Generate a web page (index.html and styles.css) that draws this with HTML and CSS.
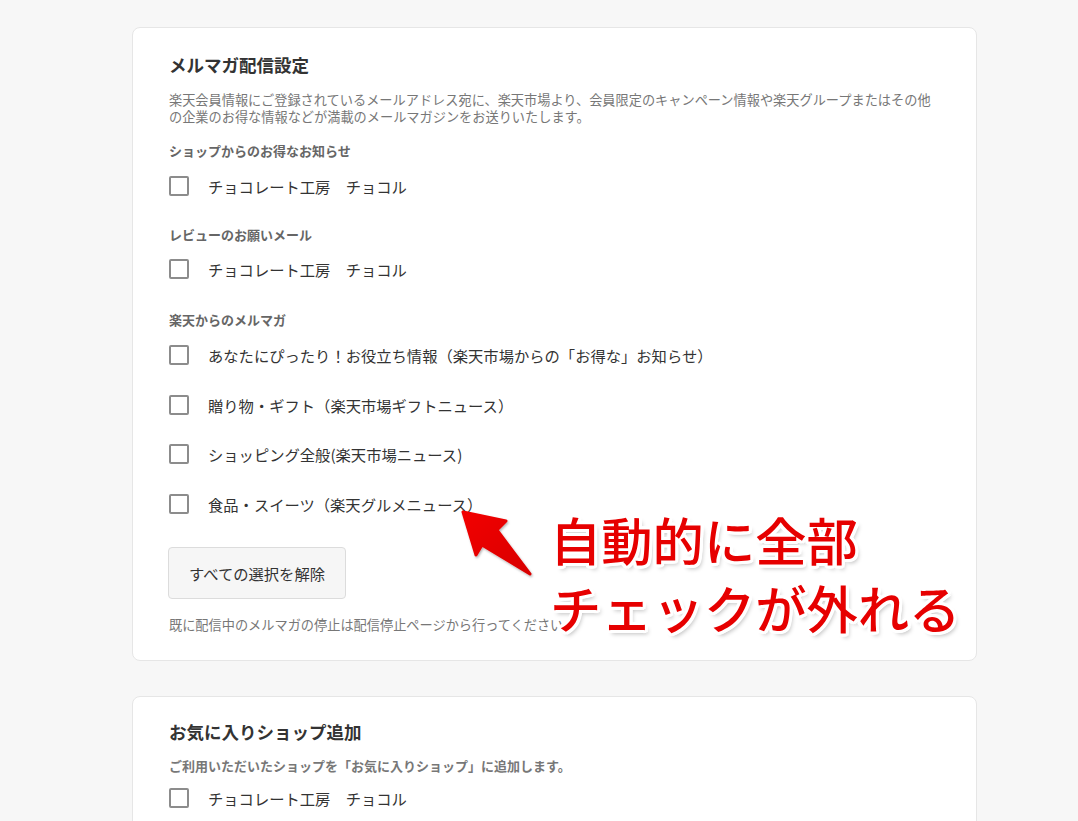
FILE: index.html
```html
<!DOCTYPE html>
<html lang="ja">
<head>
<meta charset="utf-8">
<title>メルマガ配信設定</title>
<link rel="stylesheet" href="styles.css">
</head>
<body>
<div class="page">
  <section class="card card-first">
    <h2 class="title">メルマガ配信設定</h2>
    <p class="desc">楽天会員情報にご登録されているメールアドレス宛に、楽天市場より、会員限定のキャンペーン情報や楽天グループまたはその他の企業のお得な情報などが満載のメールマガジンをお送りいたします。</p>

    <h3 class="group">ショップからのお得なお知らせ</h3>
    <label class="check"><span class="box"></span><span class="text">チョコレート工房　チョコル</span></label>

    <h3 class="group">レビューのお願いメール</h3>
    <label class="check check-tight"><span class="box"></span><span class="text">チョコレート工房　チョコル</span></label>

    <h3 class="group group-wide">楽天からのメルマガ</h3>
    <div class="list">
      <label class="check"><span class="box"></span><span class="text">あなたにぴったり！お役立ち情報（楽天市場からの「お得な」お知らせ）</span></label>
      <label class="check"><span class="box"></span><span class="text">贈り物・ギフト（楽天市場ギフトニュース）</span></label>
      <label class="check"><span class="box"></span><span class="text">ショッピング全般(楽天市場ニュース)</span></label>
      <label class="check"><span class="box"></span><span class="text">食品・スイーツ（楽天グルメニュース）</span></label>
    </div>

    <button class="btn" type="button">すべての選択を解除</button>
    <p class="note">既に配信中のメルマガの停止は配信停止ページから行ってください。</p>
  </section>

  <section class="card card-second">
    <h2 class="title">お気に入りショップ追加</h2>
    <p class="desc2">ご利用いただいたショップを「お気に入りショップ」に追加します。</p>
    <label class="check"><span class="box"></span><span class="text">チョコレート工房　チョコル</span></label>
  </section>
</div>

<svg class="arrow" width="90" height="85" viewBox="450 500 90 85" aria-hidden="true">
  <defs>
    <linearGradient id="ag" x1="0" y1="0" x2="1" y2="1">
      <stop offset="0" stop-color="#f20000"/>
      <stop offset="1" stop-color="#d80000"/>
    </linearGradient>
    <filter id="sh" x="-20%" y="-20%" width="150%" height="150%">
      <feDropShadow dx="1" dy="1.5" stdDeviation="1.2" flood-color="#000" flood-opacity="0.3"/>
    </filter>
  </defs>
  <polygon points="463,512 506,521 497,530 530,574 482,545 476,555" fill="url(#ag)" stroke="url(#ag)" stroke-width="3" stroke-linejoin="round" filter="url(#sh)"/>
</svg>

<div class="annot">自動的に全部<br>チェックが外れる</div>
</body>
</html>
```

FILE: styles.css
```css
html, body {
  margin: 0;
  padding: 0;
}
body {
  background: #f7f7f7;
  font-family: "Noto Sans CJK JP", "Noto Sans", sans-serif;
  color: #333;
  width: 1078px;
  height: 821px;
  overflow: hidden;
  position: relative;
}
.page {
  padding: 27px 0 0 132px;
  display: flex;
  flex-direction: column;
  gap: 35px;
}
.card {
  width: 845px;
  box-sizing: border-box;
  background: #fff;
  border: 1px solid #e6e6e6;
  border-radius: 8px;
  padding: 25px 36px 27px 36px;
  display: flex;
  flex-direction: column;
  align-items: flex-start;
}
.card-second {
  padding-top: 23px;
}
.title {
  margin: 0;
  font-size: 17.5px;
  line-height: 24.5px;
  font-weight: 700;
  color: #333;
}
.desc {
  margin: 13px 0 0;
  max-width: 770px;
  font-size: 13.2px;
  line-height: 17px;
  color: #777;
}
.desc2 {
  margin: 12.5px 0 0;
  font-size: 13px;
  line-height: 17px;
  font-weight: 700;
  color: #777;
}
.group {
  margin: 17px 0 0;
  font-size: 13px;
  line-height: 18px;
  font-weight: 700;
  color: #666;
}
.check + .group {
  margin-top: 30px;
}
.check + .group-wide {
  margin-top: 32px;
}
.list + .btn {
  margin-top: 33px;
}
.check {
  display: flex;
  align-items: center;
  gap: 19px;
  height: 20px;
  margin-top: 16px;
}
.check-tight {
  margin-top: 15px;
}
.card-second .check {
  margin-top: 14px;
}
.list {
  display: flex;
  flex-direction: column;
  gap: 29.5px;
  margin-top: 16.5px;
}
.list .check {
  margin-top: 0;
}
.box {
  width: 20px;
  height: 20px;
  box-sizing: border-box;
  border: 2px solid #8c8c8c;
  border-radius: 2px;
  background: #fff;
  flex: none;
}
.text {
  font-size: 15.3px;
  line-height: 20px;
  color: #333;
  white-space: nowrap;
}
.btn {
  height: 52px;
  padding: 0 20px;
  background: #f6f6f6;
  border: 1px solid #dcdcdc;
  border-radius: 4px;
  font-family: inherit;
  font-size: 15.3px;
  color: #333;
  margin-left: -1px;
}
.note {
  margin: 17px 0 0;
  font-size: 13.2px;
  line-height: 17px;
  color: #777;
}
.arrow {
  position: absolute;
  left: 450px;
  top: 500px;
}
.annot {
  position: absolute;
  left: 550px;
  top: 505px;
  font-size: 51.3px;
  line-height: 68px;
  font-weight: 500;
  color: #e60000;
  white-space: nowrap;
  letter-spacing: 0;
  text-shadow:
    3px 0 0 #fff, -3px 0 0 #fff, 0 3px 0 #fff, 0 -3px 0 #fff,
    2px 2px 0 #fff, -2px -2px 0 #fff, 2px -2px 0 #fff, -2px 2px 0 #fff,
    3px 1.5px 0 #fff, -3px 1.5px 0 #fff, 3px -1.5px 0 #fff, -3px -1.5px 0 #fff,
    1.5px 3px 0 #fff, -1.5px 3px 0 #fff, 1.5px -3px 0 #fff, -1.5px -3px 0 #fff,
    3px 4px 4px rgba(0,0,0,0.25);
}
```
